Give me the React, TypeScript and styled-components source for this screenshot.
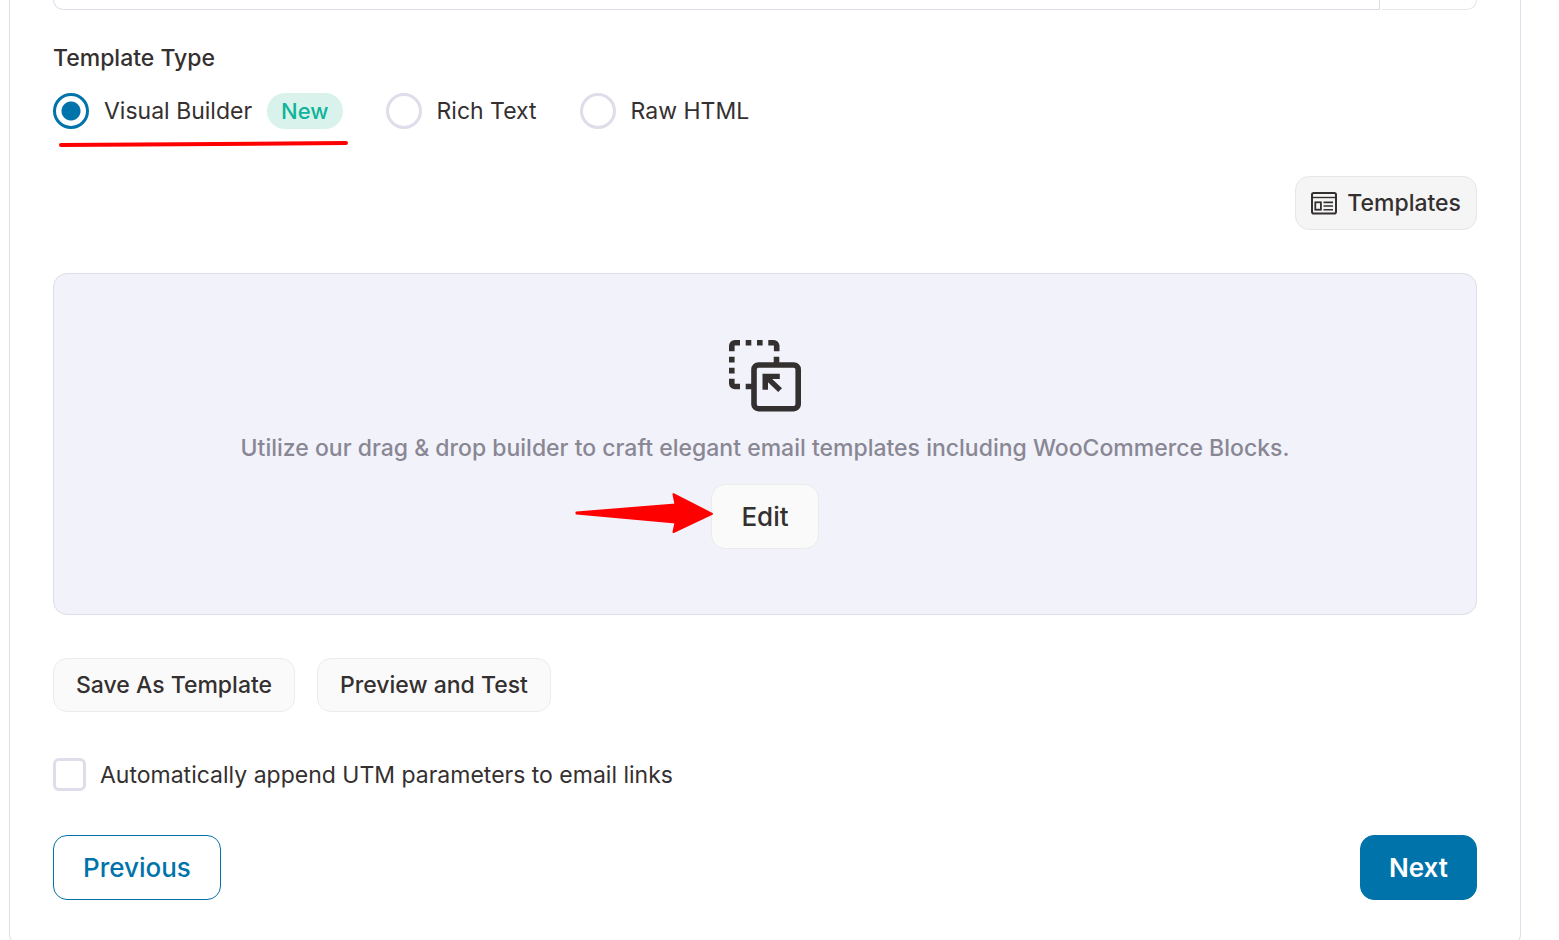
import React, { useState } from 'react';
import styled, { createGlobalStyle, css } from 'styled-components';

const GlobalStyle = createGlobalStyle`
  *, *::before, *::after { box-sizing: border-box; }
  body {
    margin: 0;
    background: #fff;
    color: #353030;
    font-family: Inter, "Liberation Sans", sans-serif;
    font-size: 23px;
    line-height: 28px;
  }
  button, input { font: inherit; color: inherit; margin: 0; }
`;

const Page = styled.div`
  height: 100vh;
  overflow: hidden;
  padding: 0 38px 0 9px;
`;

const Card = styled.form`
  padding: 0 43px 47px;
  border: 1px solid #dedde9;
  border-top: 0;
  border-radius: 0 0 14px 14px;
`;

const SubjectRow = styled.div`
  display: flex;
  gap: 2px;
`;

const SubjectInput = styled.input`
  flex: 1;
  min-width: 0;
  height: 10px;
  padding: 0 16px;
  background: #fff;
  border: 1px solid #dedde9;
  border-top: 0;
  border-radius: 0 0 0 12px;
`;

const SubjectAction = styled.button`
  width: 95px;
  height: 10px;
  padding: 0;
  background: #fff;
  border: 1px solid #e6e6e9;
  border-width: 0 1px 1px 0;
  border-radius: 0 0 12px 0;
`;

const TypeGroup = styled.fieldset`
  margin: 34px 0 0;
  padding: 0;
  border: 0;
`;

const TypeLegend = styled.legend`
  padding: 0;
  font-weight: 500;
`;

const TypeOptions = styled.div`
  display: flex;
  gap: 43px;
  margin-top: 21px;
`;

const Option = styled.label`
  position: relative;
  display: flex;
  align-items: center;
  gap: 15px;
  height: 36px;
`;

const Radio = styled.input`
  appearance: none;
  flex: none;
  width: 36px;
  height: 36px;
  background: #fff;
  border: 3px solid #dedde9;
  border-radius: 50%;
  &:checked {
    border-color: #0073aa;
    background: radial-gradient(circle, #0073aa 9px, #fff 10px);
  }
`;

const Badge = styled.span`
  height: 36px;
  padding: 0 14px;
  border-radius: 18px;
  background: #d9f3ec;
  color: #10b39b;
  font-size: 22px;
  font-weight: 500;
  line-height: 36px;
`;

const Underline = styled.svg`
  position: absolute;
  top: 46px;
  left: 5px;
`;

const Toolbar = styled.div<{ $align?: string; $top: number; $gap?: number }>`
  display: flex;
  justify-content: ${p => p.$align ?? 'flex-start'};
  gap: ${p => p.$gap ?? 0}px;
  margin-top: ${p => p.$top}px;
`;

const Button = styled.button<{ $size?: 'large'; $tone?: 'plain' | 'grey' | 'outline' | 'primary' }>`
  display: flex;
  align-items: center;
  justify-content: center;
  gap: 10px;
  height: 54px;
  padding: 0 22px;
  border: 1px solid #ebebeb;
  border-radius: 14px;
  background: #fafafa;
  font-weight: 500;
  white-space: nowrap;
  cursor: pointer;
  ${p => p.$size === 'large' && css`
    height: 65px;
    padding: 0 29px;
    font-size: 26px;
  `}
  ${p => p.$tone === 'grey' && css`
    padding: 0 15px;
    background: #f5f5f5;
    border-color: #e6e6e8;
  `}
  ${p => p.$tone === 'outline' && css`
    background: #fff;
    border-color: #0073aa;
    color: #0073aa;
  `}
  ${p => p.$tone === 'primary' && css`
    padding: 0 28px;
    background: #0073aa;
    border-color: #0073aa;
    color: #fff;
    font-weight: 600;
  `}
`;

const BuilderPanel = styled.section`
  display: flex;
  flex-direction: column;
  align-items: center;
  gap: 22px;
  margin-top: 43px;
  padding: 66px 20px 65px;
  border: 1px solid #dedde9;
  border-radius: 14px;
  background: #f2f2fb;
`;

const BuilderText = styled.p`
  margin: 0;
  color: #898793;
  font-weight: 500;
  text-align: center;
`;

const EditWrap = styled.div`
  position: relative;
`;

const Arrow = styled.svg`
  position: absolute;
  top: 8px;
  right: 105px;
`;

const CheckOption = styled.label`
  display: flex;
  align-items: center;
  gap: 14px;
  margin-top: 46px;
`;

const Checkbox = styled.input`
  appearance: none;
  flex: none;
  width: 33px;
  height: 33px;
  background: #fff;
  border: 3px solid #dedde9;
  border-radius: 6px;
  &:checked { background: #0073aa; border-color: #0073aa; }
`;

const TemplatesIcon = () => (
  <svg width="26" height="24" viewBox="0 0 26 24" fill="none" stroke="#353030" strokeWidth="2" aria-hidden="true">
    <rect x="1" y="2" width="24" height="20.5" rx="1.8" />
    <path d="M1 6.5h24" strokeWidth="1.4" />
    <rect x="4.3" y="11.3" width="5.6" height="7.4" strokeWidth="1.8" />
    <path d="M12.5 11.4H22M12.5 15H22M12.5 18.7H22" strokeWidth="1.6" />
  </svg>
);

const BuilderIcon = () => (
  <svg width="73" height="72" viewBox="1 0 73 72" fill="none" stroke="#353030" strokeWidth="5.6" aria-hidden="true">
    <path d="M3.8 11.2V5.8a3 3 0 0 1 3-3H12M17.7 2.8h5.6M29 2.8h5.6M40.3 2.8h5.4a3 3 0 0 1 3 3v5.4M48.5 16.7V23M3.8 16.7v5.8M3.8 27.8v5.7M3.8 38.8v4.7a3 3 0 0 0 3 3H12M17.7 46.5H24" />
    <rect x="26" y="25" width="44.2" height="43.7" rx="4.5" />
    <path d="M34.5 33.7h17.3v5.4h-7.6L54 48.3 50.2 52 40 42.2v7.6h-5.5z" fill="#353030" stroke="none" />
  </svg>
);

const TYPES = ['Visual Builder', 'Rich Text', 'Raw HTML'];

export default function App() {
  const [type, setType] = useState(TYPES[0]);
  const [utm, setUtm] = useState(false);

  return (
    <>
      <GlobalStyle />
      <Page>
        <Card onSubmit={e => e.preventDefault()}>
          <SubjectRow>
            <SubjectInput type="text" aria-label="Subject" />
            <SubjectAction type="button" aria-label="Insert" />
          </SubjectRow>

          <TypeGroup>
            <TypeLegend>Template Type</TypeLegend>
            <TypeOptions>
              {TYPES.map(name => (
                <Option key={name}>
                  <Radio type="radio" name="type" checked={type === name} onChange={() => setType(name)} />
                  {name}
                  {name === 'Visual Builder' && (
                    <>
                      <Badge>New</Badge>
                      <Underline width="292" height="10" viewBox="0 0 292 10" aria-hidden="true">
                        <path d="M3 6L288 4" stroke="#ff0000" strokeWidth="4" strokeLinecap="round" />
                      </Underline>
                    </>
                  )}
                </Option>
              ))}
            </TypeOptions>
          </TypeGroup>

          <Toolbar $align="flex-end" $top={47}>
            <Button type="button" $tone="grey"><TemplatesIcon />Templates</Button>
          </Toolbar>

          <BuilderPanel>
            <BuilderIcon />
            <BuilderText>
              Utilize our drag &amp; drop builder to craft elegant email templates including WooCommerce Blocks.
            </BuilderText>
            <EditWrap>
              <Button type="button" $size="large">Edit</Button>
              <Arrow width="140" height="42" viewBox="0 0 140 42" aria-hidden="true">
                <path
                  d="M2.5 20.5L101.5 12.5 99.5 2.2 138 21.8 99.5 40 101.5 30.5 2.5 21.5z"
                  fill="#ff0000" stroke="#ff0000" strokeWidth="2" strokeLinejoin="round"
                />
              </Arrow>
            </EditWrap>
          </BuilderPanel>

          <Toolbar $top={43} $gap={22}>
            <Button type="button">Save As Template</Button>
            <Button type="button">Preview and Test</Button>
          </Toolbar>

          <CheckOption>
            <Checkbox type="checkbox" checked={utm} onChange={e => setUtm(e.target.checked)} />
            Automatically append UTM parameters to email links
          </CheckOption>

          <Toolbar $align="space-between" $top={44}>
            <Button type="button" $size="large" $tone="outline">Previous</Button>
            <Button type="submit" $size="large" $tone="primary">Next</Button>
          </Toolbar>
        </Card>
      </Page>
    </>
  );
}
